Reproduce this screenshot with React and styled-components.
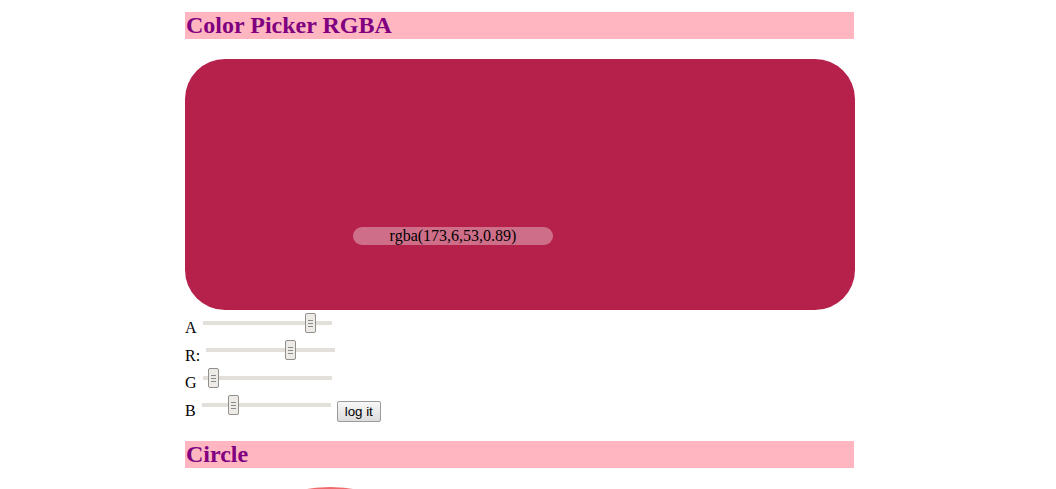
import React, { useState } from 'react';
import styled, { createGlobalStyle } from "styled-components";

const GlobalStyle = createGlobalStyle`
    body {
        margin: 0;
        background: white;
        font-family: "Liberation Serif", "Times New Roman", serif;
        font-size: 16px;
        color: black;
    }
`
const Page = styled.div`
    width: 670px;
    padding: 12px 0 0 185px;
`
const Title = styled.h2`
    margin: 0;
    width: 668px;
    padding-left: 1px;
    background-color: #ffb6c1;
    color: #800080;
    font-size: 24px;
    line-height: 27px;
    font-weight: bold;
`
const Swatch = styled.div`
    margin-top: 20px;
    height: 251px;
    border-radius: 40px;
    padding: 168px 0 0 168px;
    box-sizing: border-box;
`
const ColorLabel = styled.div`
    width: 200px;
    height: 18px;
    border-radius: 9px;
    background-color: rgba(255, 255, 255, 0.35);
    text-align: center;
    line-height: 18px;
    font-size: 16px;
`
const Controls = styled.div`
    display: flex;
    flex-direction: column;
`
const Row = styled.div`
    display: flex;
    align-items: flex-start;
    min-height: 27px;
`
const Label = styled.label`
    display: block;
    line-height: 18px;
    padding-top: ${props => props.$down}px;
`
const Slider = styled.input`
    -webkit-appearance: none;
    appearance: none;
    box-sizing: border-box;
    width: 129px;
    height: 20px;
    margin: 3px 0 0 ${props => props.$gap}px;
    padding: 0 3px;
    background: linear-gradient(#e3e0db, #e3e0db) center / 100% 4px no-repeat;
    outline: none;

    &::-webkit-slider-runnable-track {
        height: 20px;
        background: transparent;
    }
    &::-webkit-slider-thumb {
        -webkit-appearance: none;
        width: 11px;
        height: 20px;
        box-sizing: border-box;
        border: 1px solid #8f8f8f;
        border-radius: 2px;
        background:
            linear-gradient(#8a8a8a, #8a8a8a) center 6px / 5px 1px no-repeat,
            linear-gradient(#8a8a8a, #8a8a8a) center 9px / 5px 1px no-repeat,
            linear-gradient(#8a8a8a, #8a8a8a) center 12px / 5px 1px no-repeat,
            #eeebe7;
        cursor: pointer;
    }
`
const Button = styled.button`
    margin: 9px 0 0 6px;
    height: 21px;
    padding: 0 7px;
    font-family: "Liberation Sans", Arial, sans-serif;
    font-size: 13.33px;
    color: black;
    border: 1px solid #9a9a9a;
    border-radius: 2px;
    background: linear-gradient(#f7f7f7, #dddddd);
    cursor: pointer;
`
const Section = styled(Title)`
    margin-top: 19px;
`
const Circle = styled.div`
    margin: 19px 0 0 0;
    width: 290px;
    height: 290px;
    border-radius: 50%;
    background-color: #ef6a6a;
`

export default function App() {
    const [a, setA] = useState(0.89)
    const [r, setR] = useState(173)
    const [g, setG] = useState(6)
    const [b, setB] = useState(53)

    const color = `rgba(${r},${g},${b},${a})`

    const sliders = [
        { name: 'A', value: a, set: setA, max: 1, step: 0.01, gap: 6, down: 9 },
        { name: 'R:', value: r, set: setR, max: 255, step: 1, gap: 6, down: 10 },
        { name: 'G', value: g, set: setG, max: 255, step: 1, gap: 6, down: 9 },
        { name: 'B', value: b, set: setB, max: 255, step: 1, gap: 6, down: 10 },
    ]

    return (
        <>
            <GlobalStyle />
            <Page>
                <Title>Color Picker RGBA</Title>
                <Swatch style={{ backgroundColor: color }}>
                    <ColorLabel>{color}</ColorLabel>
                </Swatch>
                <Controls>
                    {sliders.map((s, i) => (
                        <Row key={s.name}>
                            <Label $down={s.down}>{s.name}</Label>
                            <Slider
                                type="range"
                                min="0"
                                max={s.max}
                                step={s.step}
                                value={s.value}
                                $gap={s.gap}
                                onChange={e => s.set(Number(e.target.value))}
                            />
                            {i === 3 ? <Button type="button" onClick={() => console.log(color)}>log it</Button> : <></>}
                        </Row>
                    ))}
                </Controls>
                <Section>Circle</Section>
                <Circle />
            </Page>
        </>
    )
}
